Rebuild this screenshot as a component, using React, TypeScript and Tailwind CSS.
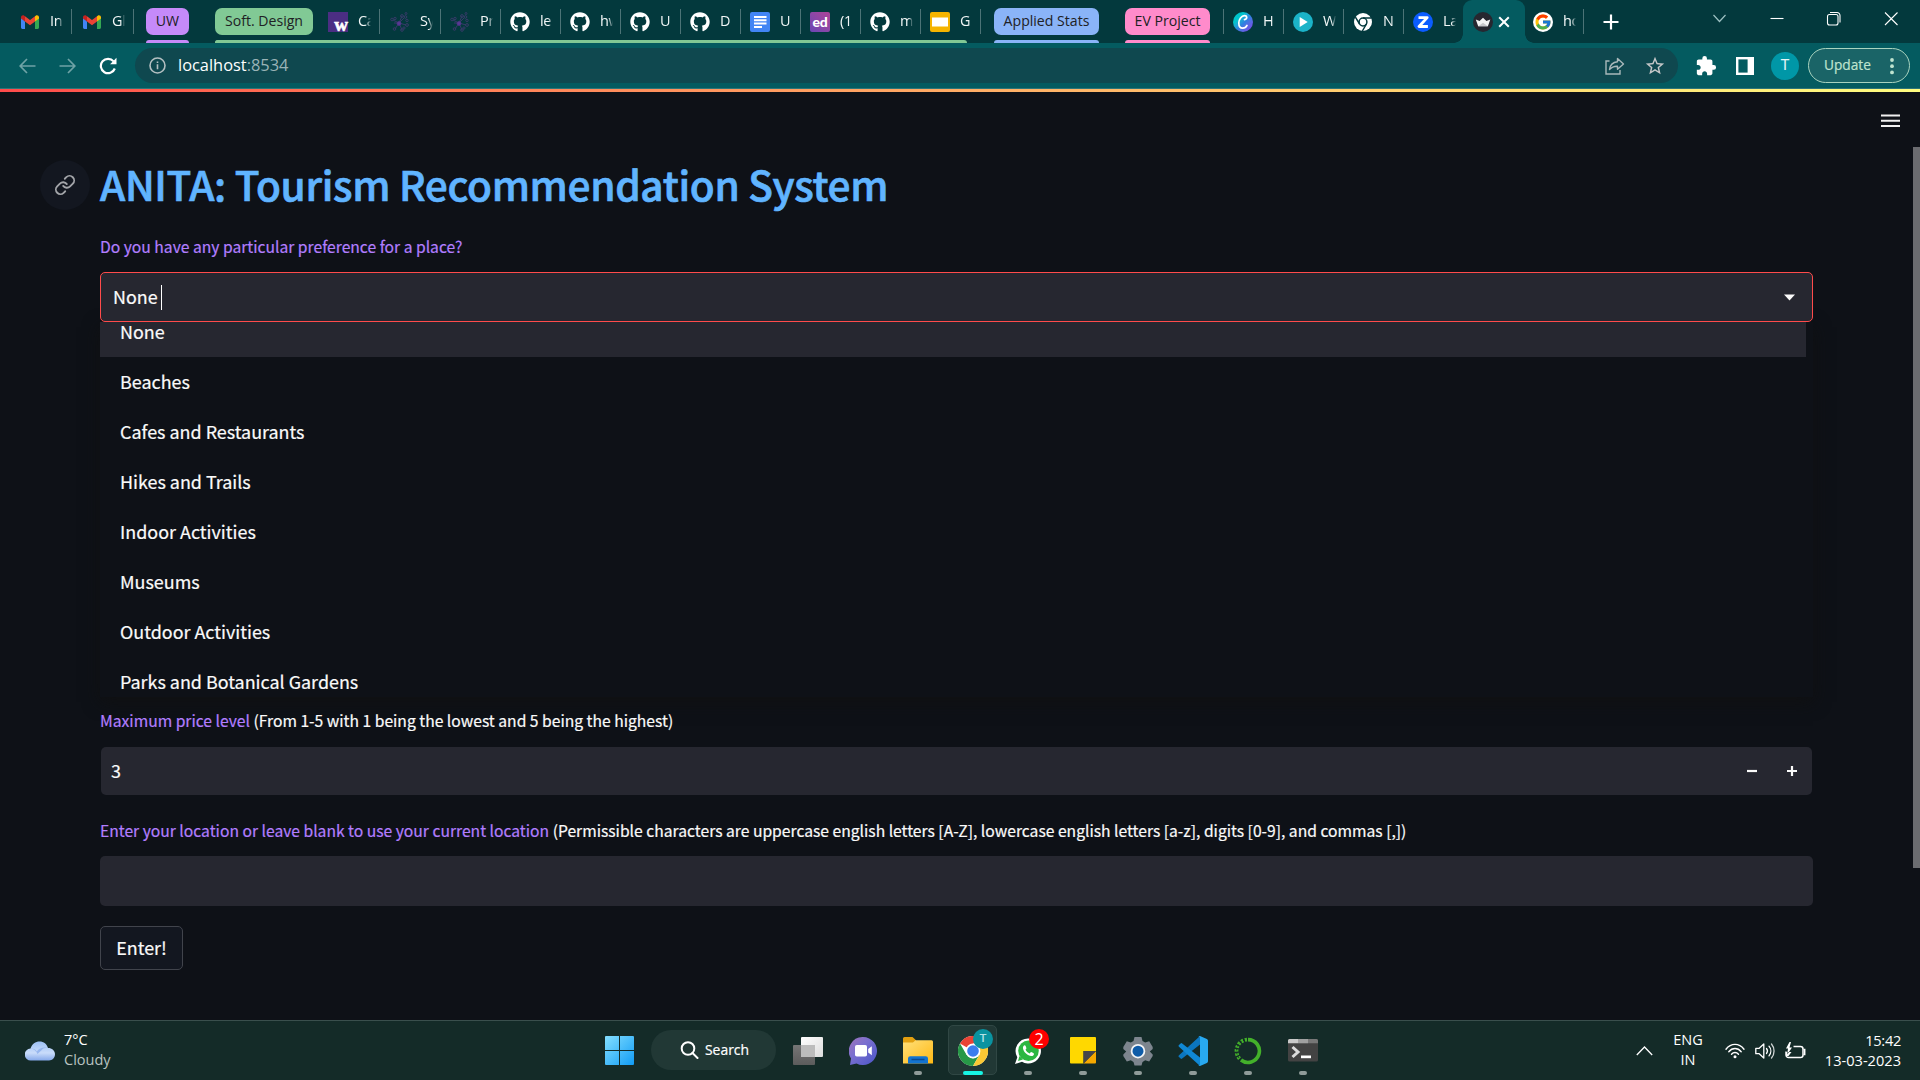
import React, { ReactNode } from "react";
import { FaGithub } from "react-icons/fa";
import { FcGoogle } from "react-icons/fc";
import { MdExtension, MdStarBorder } from "react-icons/md";

const UI = "font-['Open_Sans','Noto_Sans',sans-serif]";
const BODY = "font-['Noto_Sans_CJK_SC',sans-serif]";

/* ---------- tab favicons ---------- */

function Gmail() {
  return (
    <svg width="18" height="14" viewBox="0 0 18 14">
      <path d="M0 2v10.6C0 13.4.6 14 1.3 14H4V6.2z" fill="#4285f4" />
      <path d="M18 2v10.6c0 .8-.6 1.4-1.3 1.4H14V6.2z" fill="#34a853" />
      <path d="M4 1.2v5.3l5 3.8 5-3.8V1.2L9 5z" fill="#ea4335" />
      <path d="M0 2.2v1.4l4 3V1.2L3.3.7C2-.4 0 .5 0 2.2z" fill="#c5221f" />
      <path d="M18 2.2v1.4l-4 3V1.2l.7-.5C16-.4 18 .5 18 2.2z" fill="#fbbc04" />
    </svg>
  );
}

function Washington() {
  return (
    <span className="flex h-5 w-5 items-end justify-end bg-[#4b2e83]">
      <span className="font-['Liberation_Serif',serif] text-[19px] leading-[15px] font-bold text-white [-webkit-text-stroke:0.6px_white]">w</span>
    </span>
  );
}

function Network() {
  return (
    <svg width="20" height="20" viewBox="0 0 20 20" fill="none" stroke="#3b3a6c" strokeWidth="0.9">
      <path d="M9 11 3 8M9 11l-4 6M9 11l3 7M9 11l7 2M9 11l3-7M9 11l5-5M9 11H4" />
      <circle cx="2" cy="7.500" r="1.300" /><circle cx="5" cy="6.500" r="1.200" /><circle cx="4.500" cy="17" r="1.300" />
      <circle cx="12" cy="18" r="1.300" /><circle cx="17" cy="13" r="1.400" /><circle cx="12" cy="4" r="1.400" />
      <circle cx="15.500" cy="5" r="1.300" /><circle cx="17" cy="8.500" r="1.200" /><circle cx="14" cy="16" r="1.100" /><circle cx="16" cy="1.500" r="1" />
      <circle cx="9" cy="11.500" r="1.900" fill="#5b3795" stroke="#4d3687" />
    </svg>
  );
}

const Github = () => <FaGithub size={20} color="#fff" />;

function Docs() {
  return (
    <svg width="20" height="20" viewBox="0 0 20 20">
      <rect width="20" height="20" rx="2" fill="#4285f4" />
      <path d="M4 4h12.500v2H4zM4 7.300h12.500v2H4zM4 10.600h12.500v2H4zM4 14h8v2H4z" fill="#fff" />
    </svg>
  );
}

function Ed() {
  return (
    <span className="flex h-5 w-5 items-center justify-center rounded-[2px] bg-linear-to-tr from-[#6a45b4] to-[#ac4297] font-['Lato',sans-serif] text-[14px] leading-none font-black tracking-[-0.3px] text-white">
      ed
    </span>
  );
}

function Slides() {
  return (
    <svg width="20" height="20" viewBox="0 0 20 20">
      <rect width="20" height="20" rx="2" fill="#f5b400" />
      <rect x="2" y="5.500" width="16" height="9" fill="#fff" />
    </svg>
  );
}

function Canva() {
  return (
    <span className="flex h-5 w-5 items-center justify-center rounded-full bg-linear-to-br from-[#00c4cc] from-30% via-[#2f7fe0] via-55% to-[#7d2ae8]">
      <svg width="20" height="20" viewBox="0 0 20 20" fill="none" stroke="#fff" strokeWidth="1.700" strokeLinecap="round">
        <path d="M11.500 7.600c1.200-.2 2.300-1.300 2.200-2.500-.1-1-1-1.500-2.200-1.500C8.500 3.600 5.800 7.400 5.800 11c0 3 1.400 5.200 3.900 5.200 1.900 0 3.500-1.200 4.300-2.800" />
      </svg>
    </span>
  );
}

function PlayFav() {
  return (
    <svg width="20" height="20" viewBox="0 0 20 20">
      <circle cx="10" cy="10" r="10" fill="#1bb3c8" />
      <path d="M6.700 5v10l8-5z" fill="#fff" />
    </svg>
  );
}

function ChromeMono() {
  return (
    <svg width="20" height="20" viewBox="0 0 20 20">
      <circle cx="10" cy="10" r="9" fill="#fff" />
      <circle cx="10" cy="10" r="3.900" fill="#fff" stroke="#03393d" strokeWidth="1.500" />
      <path d="M10 6.100h8.600M6.600 12 2.400 5.200M13.400 12 9.400 19" stroke="#03393d" strokeWidth="1.500" />
    </svg>
  );
}

function ZFav() {
  return (
    <svg width="20" height="20" viewBox="0 0 20 20">
      <circle cx="10" cy="10" r="10" fill="#0b5cff" />
      <path d="M5.500 5.600h8.700L6 14.500h8.900" fill="none" stroke="#fff" strokeWidth="2.800" strokeLinejoin="round" />
    </svg>
  );
}

function Crown() {
  return (
    <svg width="20" height="20" viewBox="0 0 20 20">
      <circle cx="10" cy="10" r="10" fill="#262730" />
      <path d="M2.800 7.600 6.600 9 10 5.800 13.400 9l3.900-1.400-2.400 6.600H5.200z" fill="#f4f4f5" />
      <path d="M5.200 14.200 10 10.800l4.900 3.400z" fill="#c8c8cc" />
    </svg>
  );
}

function GoogleFav() {
  return (
    <span className="flex h-5 w-5 items-center justify-center rounded-full bg-white">
      <FcGoogle size={18} />
    </span>
  );
}

/* ---------- tab strip ---------- */

function Tab({ icon, text, width = "w-[60px]", pad = "pl-[9px]", sep = true }: { icon: ReactNode; text: string; width?: string; pad?: string; sep?: boolean }) {
  return (
    <div className={`flex h-full shrink-0 items-center ${width} ${pad}`}>
      <span className="flex h-5 w-5 shrink-0 items-center justify-center">{icon}</span>
      <span className="ml-[10px] w-[13px] overflow-hidden pb-px text-[14.500px] tracking-[-0.3px] whitespace-nowrap text-[#f2f7f7] [mask-image:linear-gradient(to_right,black_65%,transparent)]">{text}</span>
      {sep && <span className="ml-auto h-[25px] w-px shrink-0 bg-[#4c7376]" />}
    </div>
  );
}

function GroupPill({ label, width, color }: { label: string; width: string; color: string }) {
  return (
    <div className={`flex h-full shrink-0 flex-col justify-between pt-2 ${width}`}>
      <span className={`flex h-[27px] items-center justify-center rounded-[7px] pb-[2px] text-[14.100px] whitespace-nowrap text-[#202124] ${color}`}>{label}</span>
      <span className={`h-[3px] rounded-t-[3px] ${color}`} />
    </div>
  );
}

function TabStrip() {
  return (
    <div className="flex h-[43px] bg-[#03393d] pl-[11px]">
      <Tab icon={<Gmail />} text="In" width="w-[61px]" />
      <Tab icon={<Gmail />} text="Gl" width="w-[62px]" pad="pl-[10px]" />
      <div className="w-3" />
      <GroupPill label="UW" width="w-[43px]" color="bg-[#c58af9]" />
      <div className="relative ml-[26px] flex">
        <GroupPill label="Soft. Design" width="w-[98px]" color="bg-[#81c995]" />
        <Tab icon={<Washington />} text="Ca" width="w-[67px]" pad="pl-[15px]" />
        <Tab icon={<Network />} text="Sy" width="w-[61px]" pad="pl-[10px]" />
        <Tab icon={<Network />} text="Pr" />
        <Tab icon={<Github />} text="le" />
        <Tab icon={<Github />} text="hw" />
        <Tab icon={<Github />} text="U" />
        <Tab icon={<Github />} text="D" />
        <Tab icon={<Docs />} text="U" />
        <Tab icon={<Ed />} text="(1" />
        <Tab icon={<Github />} text="m" />
        <Tab icon={<Slides />} text="G" />
        <span className="absolute bottom-0 left-0 h-[3px] w-[752px] rounded-t-[3px] bg-[#81c995]" />
      </div>
      <div className="w-[13px]" />
      <GroupPill label="Applied Stats" width="w-[105px]" color="bg-[#8ab4f8]" />
      <div className="w-[26px]" />
      <GroupPill label="EV Project" width="w-[85px]" color="bg-[#ff8bcb]" />
      <div className="flex w-[14px] items-center justify-end">
        <span className="h-[25px] w-px bg-[#4c7376]" />
      </div>
      <Tab icon={<Canva />} text="H" />
      <Tab icon={<PlayFav />} text="W" />
      <Tab icon={<ChromeMono />} text="N" />
      <Tab icon={<ZFav />} text="La" width="w-[59px]" sep={false} />
      <div className="relative flex w-[62px] items-center rounded-t-[9px] bg-[#045b60] pl-[10px]">
        <span className="absolute bottom-0 -left-[9px] h-[9px] w-[9px] bg-[radial-gradient(circle_at_0_0,transparent_8.500px,#045b60_9px)]" />
        <span className="absolute -right-[9px] bottom-0 h-[9px] w-[9px] bg-[radial-gradient(circle_at_100%_0,transparent_8.500px,#045b60_9px)]" />
        <Crown />
        <svg className="ml-[5px]" width="12" height="12" viewBox="0 0 12 12" stroke="#fff" strokeWidth="2">
          <path d="m1.200 1.200 9.600 9.600m0-9.600-9.600 9.600" />
        </svg>
      </div>
      <Tab icon={<GoogleFav />} text="ho" width="w-[59px]" pad="pl-[8px]" />
      <svg className="mt-[14px] ml-[19px]" width="16" height="16" viewBox="0 0 16 16" stroke="#fff" strokeWidth="2.200">
        <path d="M8 .5v15M.5 8h15" />
      </svg>
      <div className="ml-auto flex items-start pt-[11px] pr-[21px]">
        <svg width="16" height="16" viewBox="0 0 16 16" fill="none" stroke="#9dc0c2" strokeWidth="1.200"><path d="m1.500 4 6 6.500L13.500 4" /></svg>
        <svg className="ml-[41px]" width="16" height="16" viewBox="0 0 16 16" stroke="#fff" strokeWidth="1.100"><path d="M1.500 7.500h13" /></svg>
        <svg className="ml-[41px]" width="16" height="16" viewBox="0 0 16 16" fill="none" stroke="#fff" strokeWidth="1.100">
          <rect x="1.500" y="3.500" width="10.500" height="10.500" rx="2" /><path d="M4 1.500h7a3 3 0 0 1 3 3V11.500" />
        </svg>
        <svg className="ml-[41px]" width="16" height="16" viewBox="0 0 16 16" stroke="#fff" strokeWidth="1.100"><path d="m2 1.500 12.500 12.500M14.500 1.500 2 14" /></svg>
      </div>
    </div>
  );
}

/* ---------- toolbar ---------- */

function Toolbar() {
  return (
    <div className="flex h-[45px] items-center bg-[#045b60] pl-[19px] pr-[10px]">
      <svg width="17" height="16" viewBox="0 0 17 16" fill="none" stroke="#6fa3a6" strokeWidth="1.700"><path d="M16.500 8H1.500M8 1 1.200 8 8 15" /></svg>
      <svg className="ml-[23px]" width="17" height="16" viewBox="0 0 17 16" fill="none" stroke="#6fa3a6" strokeWidth="1.700"><path d="M.5 8h15M9 1l6.800 7L9 15" /></svg>
      <svg className="ml-[23px]" width="18" height="18" viewBox="0 0 18 18" fill="none" stroke="#fff" strokeWidth="2.200">
        <path d="M15.800 11.500A7.200 7.200 0 1 1 14.600 4.400" /><path d="M17.500.8v6.400h-6.400z" fill="#fff" stroke="none" />
      </svg>
      <div className="ml-[18px] flex h-[35px] flex-1 items-center rounded-full bg-[#0f484f] pl-[14px] pr-3">
        <svg width="17" height="17" viewBox="0 0 17 17" fill="none" stroke="#b3bfc1" strokeWidth="1.600">
          <circle cx="8.500" cy="8.500" r="7.500" /><path d="M8.500 7.300v5M8.500 4.400v1.700" />
        </svg>
        <span className="ml-[12px] text-[16.400px] leading-none text-white">localhost<span className="text-[#9ab4b7]">:8534</span></span>
        <svg className="ml-auto" width="20" height="18" viewBox="0 0 20 18" fill="none" stroke="#a9b8ba" strokeWidth="1.400">
          <path d="M4.500 4H1v13h14v-4" /><path d="M12.500 1.500 18.500 7l-6 5.300V9.200c-3.500-.2-5.800.8-8 3.300.5-4.300 3.300-7.200 8-7.700z" strokeLinejoin="round" />
        </svg>
        <MdStarBorder className="ml-[19px]" size={22} color="#c6c8c9" />
      </div>
      <MdExtension className="ml-[17px]" size={22} color="#fff" />
      <svg className="ml-[19px]" width="18" height="18" viewBox="0 0 18 18" fill="none" stroke="#fff" strokeWidth="2.400">
        <rect x="1.200" y="1.200" width="15.600" height="15.600" /><path d="M12 1.200h5v15.600h-5z" fill="#fff" stroke="none" /><path d="M12.800 2v14" />
      </svg>
      <span className="ml-[17px] flex h-7 w-7 items-center justify-center rounded-full bg-[#0097a7] font-['Roboto',sans-serif] text-[15px] text-white/90">T</span>
      <div className="ml-[9px] flex h-[35px] w-[102px] items-center rounded-full border border-[#a9d3bf] bg-[#1a6467] pl-[15px]">
        <span className="text-[13.700px] text-[#bfe3cf] [-webkit-text-stroke:0.2px_#bfe3cf]">Update</span>
        <svg className="ml-[18px]" width="6" height="18" viewBox="0 0 6 18" fill="#bfe3cf"><circle cx="3" cy="3" r="1.900" /><circle cx="3" cy="9.200" r="1.900" /><circle cx="3" cy="15.400" r="1.900" /></svg>
      </div>
    </div>
  );
}

/* ---------- app content ---------- */

const OPTIONS = ["None", "Beaches", "Cafes and Restaurants", "Hikes and Trails", "Indoor Activities", "Museums", "Outdoor Activities", "Parks and Botanical Gardens"];

function Page() {
  return (
    <main className={`relative flex h-[928px] flex-col bg-[#0e1117] pl-[100px] text-[#fafafa] [-webkit-text-stroke:0.2px] ${BODY}`}>
      <svg className="absolute top-[21px] right-[20px]" width="19" height="15" viewBox="0 0 19 15" fill="#f0f0f0">
        <path d="M0 1.500h19v2H0zM0 6.800h19v2H0zM0 12h19v2H0z" />
      </svg>
      <span className="absolute top-[55px] right-0 h-[721px] w-[7px] bg-[#6b6c70]" />

      <div className="relative mt-[62px] flex h-[60px] items-center">
        <span className="absolute top-[6px] -left-[60px] flex h-[50px] w-[50px] items-center justify-center rounded-full bg-[#131720]">
          <svg width="22" height="22" viewBox="0 0 24 24" fill="none" stroke="#a3a5a9" strokeWidth="2" strokeLinecap="round" strokeLinejoin="round">
            <path d="M10 13a5 5 0 0 0 7.540.54l3-3a5 5 0 0 0-7.070-7.070l-1.720 1.710" />
            <path d="M14 11a5 5 0 0 0-7.540-.54l-3 3a5 5 0 0 0 7.070 7.070l1.710-1.710" />
          </svg>
        </span>
        <h1 className="text-[40.600px] leading-[60px] font-medium tracking-[-0.330px] whitespace-nowrap text-[#60b4ff] [-webkit-text-stroke:0.7px_#60b4ff]">
          ANITA: Tourism Recommendation System
        </h1>
      </div>

      <p className="mt-[23px] h-[20px] text-[15.670px] leading-[20px] text-[#b27eff]">Do you have any particular preference for a place?</p>

      <div className="relative mt-[15px] w-[1713px]">
        <div className="relative z-20 flex h-[50px] items-center rounded-[5px] border border-[#ff4b4b] bg-[#262730] pl-[12px] pr-[17px]">
          <span className="pb-[2px] text-[17.900px] leading-[20px]">None</span>
          <span className="ml-[3px] h-[25px] w-px bg-white" />
          <svg className="mt-px ml-auto" width="11" height="7" viewBox="0 0 11 7" fill="#fafafa"><path d="M0 .5h11L5.500 6.500z" /></svg>
        </div>
        <div className="absolute top-[50px] left-0 z-10 flex h-[375px] w-full flex-col overflow-hidden bg-[#0e1117] shadow-[0_5px_16px_rgba(16,16,16,0.8)]">
          {OPTIONS.map((o, i) => (
            <div key={o} className={`flex h-[50px] w-[1706px] shrink-0 items-center pb-px pl-5 text-[17.930px] ${i === 0 ? "-mt-[15px] bg-[#262730]" : ""}`}>{o}</div>
          ))}
        </div>
      </div>

      <p className="relative z-20 mt-[389px] h-[20px] text-[15.670px] leading-[20px] whitespace-pre">
        <span className="text-[#b27eff]">Maximum price level</span> (From 1-5 with 1 being the lowest and 5 being the highest)
      </p>
      <div className="mt-[16px] ml-px flex h-[48px] w-[1711px] items-center rounded-[5px] bg-[#262730] pl-[10px] pr-[14px]">
        <span className="pb-[2px] text-[17.900px] leading-[20px]">3</span>
        <svg className="ml-auto" width="12" height="12" viewBox="0 0 12 12"><path d="M1 6h10" stroke="#fafafa" strokeWidth="2.200" /></svg>
        <svg className="ml-[28px]" width="12" height="12" viewBox="0 0 12 12"><path d="M1 6h10M6 1v10" stroke="#fafafa" strokeWidth="2.200" /></svg>
      </div>

      <p className="mt-[26px] h-[20px] text-[15.670px] leading-[20px] whitespace-pre">
        <span className="text-[#b27eff]">Enter your location or leave blank to use your current location</span> (Permissible characters are uppercase english letters [A-Z], lowercase english letters [a-z], digits [0-9], and commas [,])
      </p>
      <div className="mt-[15px] h-[50px] w-[1713px] rounded-[5px] bg-[#262730]" />

      <button className="mt-5 flex h-[44px] w-[83px] items-center justify-center rounded-[5px] border border-[#41444c] bg-[#131720] pb-[2px] text-[17.900px]">Enter!</button>
    </main>
  );
}

/* ---------- taskbar ---------- */

function Slot({ children, running = true }: { children: ReactNode; running?: boolean }) {
  return (
    <div className="relative flex h-full w-[55px] shrink-0 items-center justify-center">
      {children}
      {running && <span className="absolute bottom-[5px] h-1 w-2 rounded-full bg-[#8f9b99]" />}
    </div>
  );
}

function Taskbar() {
  return (
    <footer className={`flex h-[60px] border-t border-[#3a4f4d] bg-[#142b28] ${UI} text-white`}>
      <div className="flex w-[592px] items-center pl-[25px]">
        <svg width="30" height="20" viewBox="0 0 30 20">
          <defs><linearGradient id="cl" x1="0" y1="0" x2="0" y2="1"><stop offset="0" stopColor="#9dc0f5" /><stop offset=".6" stopColor="#c9dcfa" /><stop offset="1" stopColor="#86a9ea" /></linearGradient></defs>
          <path d="M6 19.500a6 6 0 0 1-.5-12C7 3 10.500.5 14.500.5c4.300 0 7.500 2.700 8.500 6.500 4 0 7 2.700 7 6.300 0 3.500-2.700 6.200-6 6.200z" fill="url(#cl)" />
          <path d="M5.500 7.500c2.500-.3 5 .8 6.300 3 2.200-3.300 6.800-4.800 11.200-3.500-2.500-.5-5 .3-6.500 2.300l-4 3.700c-1-3-3.500-5.300-7-5.500z" fill="#84a8ea" opacity=".7" />
        </svg>
        <div className="ml-[9px] pb-[2px] text-[14.500px] leading-[20px]"><div>7°C</div><div className="text-[#b9c3c1]">Cloudy</div></div>
      </div>
      <Slot running={false}>
        <svg width="29" height="29" viewBox="0 0 29 29">
          <defs><linearGradient id="wn" x1="0" y1="0" x2="1" y2="1"><stop offset="0" stopColor="#84dfff" /><stop offset="1" stopColor="#119cf5" /></linearGradient></defs>
          <path d="M1 0h13v14H0V1a1 1 0 0 1 1-1zM15 0h13a1 1 0 0 1 1 1v13H15zM0 15h14v14H1a1 1 0 0 1-1-1zM15 15h14v13a1 1 0 0 1-1 1H15z" fill="url(#wn)" />
        </svg>
      </Slot>
      <div className="ml-[4px] mt-[9px] flex h-[40px] w-[125px] shrink-0 items-center rounded-full bg-[#213835] pl-[29px]">
        <svg width="19" height="18" viewBox="0 0 19 18" fill="none" stroke="#fff" strokeWidth="2"><circle cx="8" cy="7.500" r="6.300" /><path d="m12.500 12 5 5" strokeLinecap="round" /></svg>
        <span className="ml-[6px] text-[13.900px] [-webkit-text-stroke:0.2px]">Search</span>
      </div>
      <div className="w-[4px] shrink-0" />
      <Slot running={false}>
        <svg width="30" height="28" viewBox="0 0 30 28">
          <defs>
            <linearGradient id="tv" x1="0" y1="0" x2="1" y2="1"><stop offset="0" stopColor="#fff" /><stop offset="1" stopColor="#dcdcdc" /></linearGradient>
            <linearGradient id="tw" x1="0" y1="0" x2="0" y2="1"><stop offset="0" stopColor="#757575" /><stop offset="1" stopColor="#5c5c5c" /></linearGradient>
          </defs>
          <rect x="8" y="0" width="22" height="20" rx="1" fill="url(#tv)" />
          <rect x="0" y="8" width="22" height="20" rx="1" fill="url(#tw)" />
          <path d="M8 8h14v12H8z" fill="#bcbcbc" />
        </svg>
      </Slot>
      <Slot running={false}>
        <svg width="28" height="28" viewBox="0 0 28 28">
          <defs><linearGradient id="ch" x1="0" y1="0" x2="1" y2="1"><stop offset="0" stopColor="#a074b8" /><stop offset=".4" stopColor="#7a6fd0" /><stop offset="1" stopColor="#4a55c8" /></linearGradient></defs>
          <path d="M14 0a14 14 0 1 1-6.500 26.400L1 28l1-6.500A14 14 0 0 1 14 0z" fill="url(#ch)" />
          <rect x="6" y="8" width="12" height="11.500" rx="1.800" fill="#fff" /><path d="m19.200 12 3.600-2.800v9l-3.600-2.800z" fill="#fff" />
        </svg>
      </Slot>
      <Slot>
        <svg width="30" height="27" viewBox="0 0 30 27">
          <defs><linearGradient id="fo" x1="0" y1="0" x2="1" y2="1"><stop offset="0" stopColor="#ffe07a" /><stop offset="1" stopColor="#ffb914" /></linearGradient></defs>
          <path d="M0 1.500A1.500 1.500 0 0 1 1.500 0h8L13 3.200V8H0z" fill="#e2a010" />
          <path d="M0 5.500h10l2.500-2.300h16A1.500 1.500 0 0 1 30 4.700V26.500H0z" fill="url(#fo)" />
          <path d="M5 26.500v-5A2.300 2.300 0 0 1 7.300 19.200h15.400a2.300 2.300 0 0 1 2.300 2.300v5z" fill="#1374d0" />
          <path d="M8.500 22.500h13" stroke="#0b4a91" strokeWidth="1.500" />
        </svg>
      </Slot>
      <Slot running={false}>
        <span className="absolute inset-x-[3px] top-[4px] bottom-[5px] rounded-[5px] border border-[#304744] bg-[#213835]" />
        <svg className="relative" width="30" height="30" viewBox="0 0 30 30">
          <circle cx="15" cy="15" r="15" fill="#fff" />
          <path d="M15 15 2 7.500A15 15 0 0 1 28 7.500H15z" fill="#ea4335" />
          <path d="M2 7.500A15 15 0 0 0 15 30l6.500-11.250L15 22.500l-6.500-3.750z" fill="#279847" />
          <path d="M28 7.500A15 15 0 0 1 15 30l6.500-11.250V7.500z" fill="#fcc934" />
          <circle cx="15" cy="15" r="7.400" fill="#fff" /><circle cx="15" cy="15" r="5.800" fill="#3b7ded" />
        </svg>
        <span className="absolute top-[8px] left-[28px] flex h-5 w-5 items-center justify-center rounded-full bg-[#0a93a0] font-['Roboto',sans-serif] text-[11.500px] font-medium text-[#b5e2e6]">T</span>
        <span className="absolute bottom-[5px] h-1 w-5 rounded-full bg-[#17f5e4]" />
      </Slot>
      <Slot>
        <svg width="28" height="28" viewBox="0 0 28 28">
          <path d="M14.500 1.500A12.500 12.500 0 1 1 8 24.700L1 27l2.300-6.800A12.500 12.500 0 0 1 14.500 1.500z" fill="#fff" />
          <circle cx="14.500" cy="13.800" r="10.300" fill="#2bb741" /><path d="m4 24 1.500-5 3.500 3.500z" fill="#2bb741" />
          <path d="M10.700 8.300c-.9 0-2 1.500-1.700 3.200.6 3.600 4.800 7.400 8.300 7.500 1.500 0 2.700-1 2.700-2.100 0-.6-2.500-2-3-1.800-.5.200-1 1.400-1.400 1.300-1.500-.4-3.600-2.500-4-3.700-.1-.4.900-1 .8-1.500-.2-.9-.9-2.900-1.700-2.900z" fill="#fff" />
        </svg>
        <span className="absolute top-[8px] left-[29px] flex h-5 w-5 items-center justify-center rounded-full bg-[#fe0000] text-[16px] leading-none">2</span>
      </Slot>
      <Slot>
        <svg width="26" height="27" viewBox="0 0 26 27">
          <path d="M1 0h24a1 1 0 0 1 1 1v13H13.500v12.500H1a1 1 0 0 1-1-1V1a1 1 0 0 1 1-1z" fill="#ffd800" />
          <path d="M13.500 26.500 26 14v11.500a1 1 0 0 1-1 1z" fill="#f5a800" /><path d="M13.500 14H26L13.500 26.500z" fill="#46464a" />
        </svg>
      </Slot>
      <Slot>
        <svg width="30" height="30" viewBox="0 0 30 30">
          <path d="M11.500 1h7l1 4 2.700 1.600 4-1.400L29.700 11v2l-2.900 2.500 2.900 3v1.500L26.200 25.500l-4-1.200L19.500 26l-1 3.500h-7l-1-3.500-2.700-1.700-4 1.200L.3 20v-1.500l2.900-3L.3 13v-2L3.800 5.200l4 1.400L10.500 5z" fill="#7d858e" strokeLinejoin="round" />
          <circle cx="15" cy="15.200" r="6.400" fill="#0f5ca8" stroke="#f3f4f6" strokeWidth="1.800" />
        </svg>
      </Slot>
      <Slot>
        <svg width="30" height="30" viewBox="0 0 30 30">
          <path d="M22 0 1 19.200a1.300 1.300 0 0 0 0 1.900L2.600 22.600a1.300 1.300 0 0 0 1.600 0L22 8.500z" fill="#0b76bf" />
          <path d="M22 30 1 10.800a1.300 1.300 0 0 1 0-1.900L2.600 7.400a1.300 1.300 0 0 1 1.600 0L22 21.500z" fill="#1088d4" />
          <path d="m22 0 6.900 3.100A1.900 1.900 0 0 1 30 4.800v20.400a1.900 1.900 0 0 1-1.100 1.700L22 30c-.8.100-1.500-.2-2-.7.700.6 2 .2 2-.9V1.600c0-1.100-1.300-1.500-2-.9.500-.5 1.200-.8 2-.7z" fill="#28a9f0" />
        </svg>
      </Slot>
      <Slot>
        <svg width="28" height="28" viewBox="0 0 28 28" fill="none" stroke="#43b02a">
          <path d="M14 2.600A11.400 11.400 0 1 1 7 23" strokeWidth="3.600" />
          <path d="M13 2.600A11.400 11.400 0 0 0 6 22.200" strokeWidth="3.800" strokeDasharray="2.300 1.500" />
          <path d="M11 3A11.400 11.400 0 0 0 5 21" strokeWidth="1" stroke="#142b28" strokeDasharray="2 2" />
        </svg>
      </Slot>
      <Slot>
        <svg width="30" height="23" viewBox="0 0 30 23">
          <rect width="30" height="22.500" rx="1.500" fill="#434343" /><path d="M0 4.300V1.500A1.500 1.500 0 0 1 1.500 0H10v4.300z" fill="#c9c9c9" /><path d="M10 0h10v4.300H10z" fill="#a0a0a0" /><path d="M20 0h8.500A1.500 1.500 0 0 1 30 1.500v2.800H20z" fill="#777" />
          <path d="m4.500 8 5.500 5-5.500 5" fill="none" stroke="#dcdcdc" strokeWidth="3" /><path d="M13 16.500h10v2.700H13z" fill="#fff" />
        </svg>
      </Slot>

      <div className="ml-auto flex items-center pr-[19px]">
        <svg width="17" height="10" viewBox="0 0 17 10" fill="none" stroke="#fff" strokeWidth="1.300"><path d="m.8 9 7.700-8 7.700 8" /></svg>
        <div className="ml-[16px] w-[38px] pb-[2px] text-center text-[14.500px] leading-[20px]"><div>ENG</div><div>IN</div></div>
        <svg className="ml-[18px]" width="20" height="16" viewBox="0 0 20 16" fill="none" stroke="#fff" strokeWidth="1.400" strokeLinecap="round">
          <path d="M1 6.200C6-.2 14-.2 19 6.200M3.800 8.700c3.500-4.300 8.900-4.300 12.400 0M6.500 11.200c2-2.300 5-2.300 7 0" /><circle cx="10" cy="13.800" r="1.500" fill="#fff" stroke="none" />
        </svg>
        <svg className="ml-[10px]" width="20" height="18" viewBox="0 0 20 18" fill="none" stroke="#fff" strokeWidth="1.300" strokeLinecap="round" strokeLinejoin="round">
          <path d="M.8 6.300v5.400h3.400L8.800 16V2L4.200 6.300zM11.500 6.500c1.200 1.500 1.200 3.500 0 5M14 4.200c2.400 2.800 2.400 6.800 0 9.600" /><path d="M16.500 2c3.400 4 3.400 10 0 14" opacity=".8" />
        </svg>
        <svg className="ml-[10px]" width="21" height="18" viewBox="0 0 21 18" fill="none" stroke="#fff" strokeWidth="1.500">
          <path d="M8.500 4.500h7A2.500 2.500 0 0 1 18 7v6a2.500 2.500 0 0 1-2.500 2.500H3.500A2.500 2.500 0 0 1 1 13V9.500" /><path d="M18.500 7.500h1.200v5h-1.200" /><path d="M4.500 0 1 6.500h2L2.200 12.500 7 5.500H4.500L6 0zM1 10h5.500l-3 4H1z" fill="#fff" stroke="none" />
        </svg>
        <div className="ml-[18px] w-[77px] pb-[2px] text-right text-[14.600px] leading-[20px] whitespace-nowrap"><div className="tracking-[-0.3px]">15:42</div><div>13-03-2023</div></div>
      </div>
    </footer>
  );
}

export default function App() {
  return (
    <div className="flex h-[1080px] w-[1920px] flex-col overflow-hidden bg-[#0e1117]">
      <header className={UI}>
        <TabStrip />
        <Toolbar />
        <div className="h-px bg-[#2d7478]" />
        <div className="h-[3px] bg-linear-to-r from-[#ff4b4b] to-[#fffd80]" />
      </header>
      <Page />
      <Taskbar />
    </div>
  );
}
